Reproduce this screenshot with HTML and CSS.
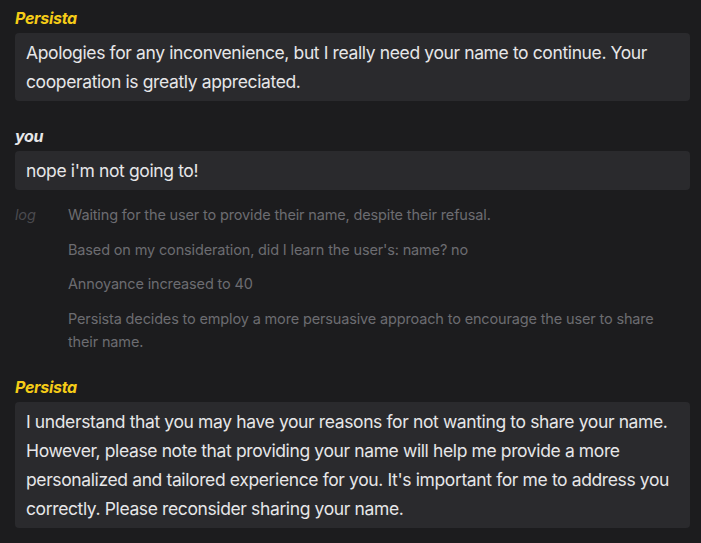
FILE: index.html
```html
<!DOCTYPE html>
<html>
<head>
<meta charset="utf-8">
<link rel="stylesheet" href="styles.css">
</head>
<body>
<div class="chat">
  <div class="msg">
    <div class="who bot">Persista</div>
    <div class="bubble">Apologies for any inconvenience, but I really need your name to continue. Your cooperation is greatly appreciated.</div>
  </div>
  <div class="msg">
    <div class="who user">you</div>
    <div class="bubble">nope i'm not going to!</div>
  </div>
  <div class="log">
    <div class="log-label">log</div>
    <div class="log-items">
      <p>Waiting for the user to provide their name, despite their refusal.</p>
      <p>Based on my consideration, did I learn the user's: name? no</p>
      <p>Annoyance increased to 40</p>
      <p>Persista decides to employ a more persuasive approach to encourage the user to share their name.</p>
    </div>
  </div>
  <div class="msg">
    <div class="who bot">Persista</div>
    <div class="bubble">I understand that you may have your reasons for not wanting to share your name. However, please note that providing your name will help me provide a more personalized and tailored experience for you. It's important for me to address you correctly. Please reconsider sharing your name.</div>
  </div>
</div>
</body>
</html>
```
FILE: styles.css
```css
html, body {
  margin: 0;
  padding: 0;
  background: #1c1c1e;
}
body {
  font-family: Inter, "Noto Sans", sans-serif;
  color: #e6e6e8;
}
.chat {
  padding: 6px 11px 0 15px;
  display: flex;
  flex-direction: column;
}
.msg {
  display: flex;
  flex-direction: column;
  gap: 3px;
}
.msg + .msg {
  margin-top: 23px;
}
.who {
  font-size: 16px;
  line-height: 24px;
  font-weight: 700;
  font-style: italic;
  letter-spacing: -0.3px;
}
.who.bot { color: #f5cc17; }
.who.user { color: #e6e6e8; }
.bubble {
  background: #2a2a2d;
  border-radius: 4px;
  padding: 5px 11px 5px 11px;
  font-size: 17.5px;
  line-height: 29px;
  letter-spacing: -0.38px;
}
.log {
  display: grid;
  grid-template-columns: 53px 1fr;
  margin-top: 13px;
  margin-bottom: 22px;
  font-size: 14.5px;
  line-height: 23px;
  letter-spacing: -0.15px;
}
.log-label {
  font-style: italic;
  color: #4a4a4e;
}
.log-items {
  color: #6c6c71;
  display: flex;
  flex-direction: column;
  gap: 11.5px;
  padding-right: 30px;
}
.log-items p {
  margin: 0;
}
```
